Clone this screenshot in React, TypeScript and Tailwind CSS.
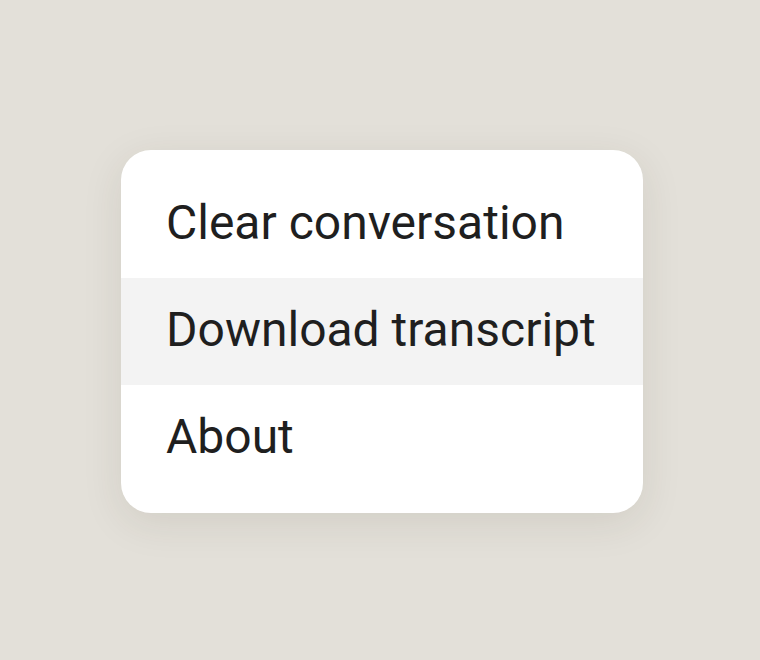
import React from "react";

export default function App() {
  const items = ["Clear conversation", "Download transcript", "About"];
  return (
    <div className="flex min-h-[660px] w-full items-center justify-center bg-[#e3e0d9]" style={{ fontFamily: "Roboto, 'Noto Sans', sans-serif" }}>
      <div className="ml-[4px] mt-[3px] w-[522px] rounded-[30px] bg-white py-[21px] shadow-[0_10px_40px_rgba(60,50,30,0.10)]">
        {items.map((label, i) => (
          <div
            key={label}
            className={
              i === 1
                ? "flex h-[107px] items-center bg-[#f3f3f3] pb-[3px] pl-[45px] text-[48px] leading-none text-[#1f1f1f]"
                : "flex h-[107px] items-center pb-[3px] pl-[45px] text-[48px] leading-none text-[#1f1f1f]"
            }
          >
            {label}
          </div>
        ))}
      </div>
    </div>
  );
}
